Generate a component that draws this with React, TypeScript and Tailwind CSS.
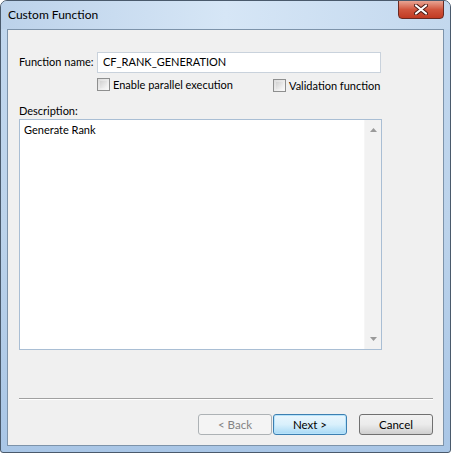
import React from "react";

const FONT = { fontFamily: "'Segoe UI', Lato, 'Liberation Sans', sans-serif" };

function Checkbox({ label }: { label: string }) {
  return (
    <label className="flex items-center gap-[3px] text-[11px] text-black whitespace-nowrap">
      <span className="w-[13px] h-[13px] shrink-0 border border-[#8e8f8f] bg-gradient-to-br from-[#dcdcdc] to-[#fafafa] p-[2px]">
        <span className="block w-full h-full bg-gradient-to-br from-[#d2d2d2] to-[#f6f6f6]" />
      </span>
      <span className="leading-none">{label}</span>
    </label>
  );
}

function Button({ label, kind }: { label: string; kind: "disabled" | "default" | "normal" }) {
  const cls =
    kind === "disabled"
      ? "border-[#adb2b5] bg-[#f4f4f4] text-[#838383]"
      : kind === "default"
      ? "border-[#3c7fb1] bg-gradient-to-b from-[#eaf6fd] via-[#d9f0fc] to-[#a7d9f5] text-black shadow-[inset_0_0_0_1px_#b6e3fb]"
      : "border-[#707070] bg-gradient-to-b from-[#f2f2f2] via-[#ebebeb] to-[#cfcfcf] text-black";
  return (
    <button className={`w-[74px] h-[21px] rounded-[3px] border text-[11.5px] leading-none ${cls}`}>
      {label}
    </button>
  );
}

export default function App() {
  return (
    <div
      className="w-[451px] h-[453px] flex flex-col rounded-t-[7px] rounded-b-[3px] border border-[#4a5a6c] bg-gradient-to-b from-[#c1d7ee] via-[#bcd3eb] to-[#a9c6e6] overflow-hidden"
      style={FONT}
    >
      {/* title bar */}
      <div className="h-[28px] flex items-start justify-between pl-[7px] bg-gradient-to-r from-[#bcd2ea] via-[#d6e6f6] to-[#c3d8ee]">
        <span className="mt-[7px] text-[12px] leading-[14px] text-black">Custom Function</span>
        <button className="w-[46px] h-[19px] mr-[6px] -mt-px rounded-b-[4px] border border-[#6a2a22] bg-gradient-to-b from-[#e8a493] via-[#d1563e] to-[#c13a22] flex items-center justify-center">
          <svg width="14" height="11" viewBox="0 0 14 11">
            <path d="M2 1.5 L12 9.5 M12 1.5 L2 9.5" stroke="#4a1a14" strokeWidth="4" strokeLinecap="round" />
            <path d="M2 1.5 L12 9.5 M12 1.5 L2 9.5" stroke="#ffffff" strokeWidth="2.2" strokeLinecap="round" />
          </svg>
        </button>
      </div>

      {/* client area */}
      <div className="mx-[6px] h-[417px] border border-[#7d93aa] bg-[#f0f0f0] flex flex-col pl-[11px] pr-[10px] text-[11px] text-black whitespace-nowrap">
        <div className="mt-[22px] flex items-center">
          <span className="w-[78px] shrink-0">Function name:</span>
          <div className="w-[284px] h-[21px] shrink-0 border border-[#c9d2dc] bg-white flex items-center pl-[5px]">
            CF_RANK_GENERATION
          </div>
        </div>
        <div className="mt-[5px] ml-[78px] flex h-[14px]">
          <div className="w-[176px]">
            <Checkbox label="Enable parallel execution" />
          </div>
          <Checkbox label="Validation function" />
        </div>

        <div className="mt-[12px] leading-[14px]">Description:</div>
        <div className="mt-[1px] w-[363px] h-[231px] border border-[#a9bed4] bg-white flex">
          <div className="flex-1 pl-[4px] pt-[2px] leading-[16px]">Generate Rank</div>
          <div className="w-[17px] bg-[#f2f2f2] border-l border-[#f6f6f6] flex flex-col items-center justify-between py-[8px]">
            <svg width="7" height="4" viewBox="0 0 7 4">
              <path d="M0 4 L3.5 0 L7 4 Z" fill="#9a9a9a" />
            </svg>
            <svg width="7" height="4" viewBox="0 0 7 4">
              <path d="M0 0 L3.5 4 L7 0 Z" fill="#9a9a9a" />
            </svg>
          </div>
        </div>

        <div className="mt-[48px] h-px bg-[#a0a0a0] border-b border-white box-content" />

        <div className="mt-[14px] flex justify-end gap-px">
          <Button label="< Back" kind="disabled" />
          <Button label="Next >" kind="default" />
          <div className="w-[10px]" />
          <Button label="Cancel" kind="normal" />
        </div>
      </div>
    </div>
  );
}
